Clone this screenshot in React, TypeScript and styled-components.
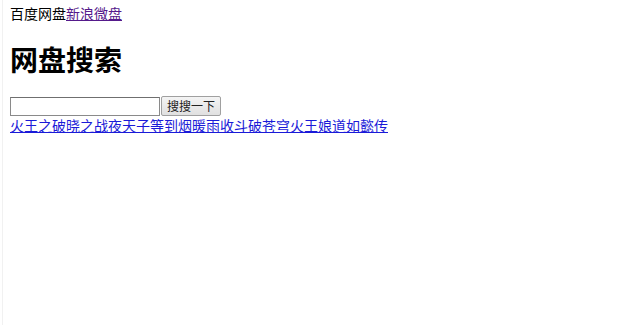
import React from "react";
import styled, { createGlobalStyle } from "styled-components";

const links = [
  "火王之破晓之战",
  "夜天子",
  "等到烟暖雨收",
  "斗破苍穹",
  "火王",
  "娘道",
  "如懿传",
];

const GlobalStyle = createGlobalStyle`
  html, body {
    background: #ffffff;
  }
  body {
    margin: 0;
    font-family: "Noto Sans CJK SC", "Liberation Sans", sans-serif;
    font-size: 14px;
    color: #000;
  }
`;

const Page = styled.div`
  min-height: 325px;
  box-sizing: border-box;
  margin-left: 2px;
  border-left: 1px solid #f1f1f1;
  padding: 4px 0 0 7px;
`;

const TopLine = styled.div`
  line-height: 18px;
`;

const Visited = styled.a`
  color: #551a8b;
  text-decoration: underline;
`;

const Title = styled.h1`
  font-size: 28px;
  font-weight: bold;
  line-height: 36px;
  margin: 19px 0 19px;
`;

const SearchForm = styled.form`
  display: flex;
  align-items: center;
  height: 20px;
`;

const SearchInput = styled.input`
  width: 150px;
  height: 19px;
  box-sizing: border-box;
  border: 1px solid #8a8a8a;
  border-top-color: #6f6f6f;
  padding: 0 2px;
  margin: 0;
  font-size: 13px;
`;

const SearchButton = styled.button`
  height: 20px;
  box-sizing: border-box;
  margin: 0 0 0 1px;
  padding: 0 5px;
  font-family: "Noto Sans CJK SC", sans-serif;
  font-size: 12px;
  line-height: 16px;
  color: #222;
  border: 1px solid #a0a0a0;
  border-radius: 2px;
  background: linear-gradient(#f4f4f4, #e0e0e0);
`;

const LinkRow = styled.div`
  line-height: 18px;
  margin-top: 0;
`;

const Link = styled.a`
  color: #1a1ad8;
  text-decoration: underline;
`;

export default function App() {
  return (
    <>
      <GlobalStyle />
      <Page>
        <TopLine>
          百度网盘<Visited href="#">新浪微盘</Visited>
        </TopLine>
        <Title>网盘搜索</Title>
        <SearchForm onSubmit={(e) => e.preventDefault()}>
          <SearchInput type="text" />
          <SearchButton type="submit">搜搜一下</SearchButton>
        </SearchForm>
        <LinkRow>
          {links.map((t) => (
            <Link href="#" key={t}>
              {t}
            </Link>
          ))}
        </LinkRow>
      </Page>
    </>
  );
}
